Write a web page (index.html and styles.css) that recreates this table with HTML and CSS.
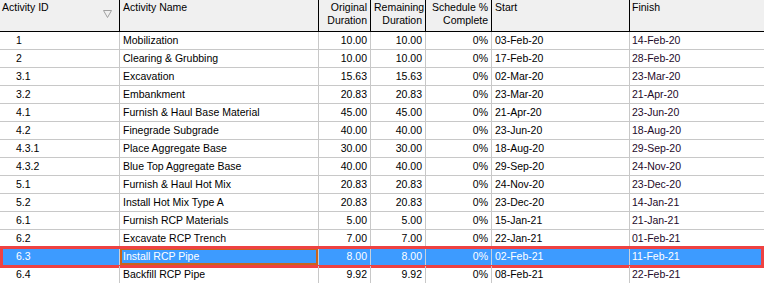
FILE: index.html
```html
<!DOCTYPE html>
<html>
<head>
<meta charset="utf-8">
<link rel="stylesheet" href="styles.css">
</head>
<body>
<div class="grid">
  <div class="row head">
    <div class="c id hd">Activity ID
      <svg class="sort" width="9" height="8" viewBox="0 0 9 8"><path d="M0.5 0.5 H8.5 L4.5 7.5 Z" fill="none" stroke="#a0a0a0" stroke-width="1"/></svg>
    </div>
    <div class="c hd">Activity Name</div>
    <div class="c hd r">Original<br>Duration</div>
    <div class="c hd r">Remaining<br>Duration</div>
    <div class="c hd r">Schedule %<br>Complete</div>
    <div class="c hd">Start</div>
    <div class="c hd last">Finish</div>
  </div>

  <div class="row"><div class="c id">1</div><div class="c">Mobilization</div><div class="c r">10.00</div><div class="c r">10.00</div><div class="c r">0%</div><div class="c">03-Feb-20</div><div class="c fin">14-Feb-20</div></div>
  <div class="row"><div class="c id">2</div><div class="c">Clearing &amp; Grubbing</div><div class="c r">10.00</div><div class="c r">10.00</div><div class="c r">0%</div><div class="c">17-Feb-20</div><div class="c fin">28-Feb-20</div></div>
  <div class="row"><div class="c id">3.1</div><div class="c">Excavation</div><div class="c r">15.63</div><div class="c r">15.63</div><div class="c r">0%</div><div class="c">02-Mar-20</div><div class="c fin">23-Mar-20</div></div>
  <div class="row"><div class="c id">3.2</div><div class="c">Embankment</div><div class="c r">20.83</div><div class="c r">20.83</div><div class="c r">0%</div><div class="c">23-Mar-20</div><div class="c fin">21-Apr-20</div></div>
  <div class="row"><div class="c id">4.1</div><div class="c">Furnish &amp; Haul Base Material</div><div class="c r">45.00</div><div class="c r">45.00</div><div class="c r">0%</div><div class="c">21-Apr-20</div><div class="c fin">23-Jun-20</div></div>
  <div class="row"><div class="c id">4.2</div><div class="c">Finegrade Subgrade</div><div class="c r">40.00</div><div class="c r">40.00</div><div class="c r">0%</div><div class="c">23-Jun-20</div><div class="c fin">18-Aug-20</div></div>
  <div class="row"><div class="c id">4.3.1</div><div class="c">Place Aggregate Base</div><div class="c r">30.00</div><div class="c r">30.00</div><div class="c r">0%</div><div class="c">18-Aug-20</div><div class="c fin">29-Sep-20</div></div>
  <div class="row"><div class="c id">4.3.2</div><div class="c">Blue Top Aggregate Base</div><div class="c r">40.00</div><div class="c r">40.00</div><div class="c r">0%</div><div class="c">29-Sep-20</div><div class="c fin">24-Nov-20</div></div>
  <div class="row"><div class="c id">5.1</div><div class="c">Furnish &amp; Haul Hot Mix</div><div class="c r">20.83</div><div class="c r">20.83</div><div class="c r">0%</div><div class="c">24-Nov-20</div><div class="c fin">23-Dec-20</div></div>
  <div class="row"><div class="c id">5.2</div><div class="c">Install Hot Mix Type A</div><div class="c r">20.83</div><div class="c r">20.83</div><div class="c r">0%</div><div class="c">23-Dec-20</div><div class="c fin">14-Jan-21</div></div>
  <div class="row"><div class="c id">6.1</div><div class="c">Furnish RCP Materials</div><div class="c r">5.00</div><div class="c r">5.00</div><div class="c r">0%</div><div class="c">15-Jan-21</div><div class="c fin">21-Jan-21</div></div>
  <div class="row"><div class="c id">6.2</div><div class="c">Excavate RCP Trench</div><div class="c r">7.00</div><div class="c r">7.00</div><div class="c r">0%</div><div class="c">22-Jan-21</div><div class="c fin">01-Feb-21</div></div>
  <div class="row sel"><div class="c id">6.3</div><div class="c focus">Install RCP Pipe</div><div class="c r">8.00</div><div class="c r">8.00</div><div class="c r">0%</div><div class="c">02-Feb-21</div><div class="c fin">11-Feb-21</div></div>
  <div class="row"><div class="c id">6.4</div><div class="c">Backfill RCP Pipe</div><div class="c r">9.92</div><div class="c r">9.92</div><div class="c r">0%</div><div class="c">08-Feb-21</div><div class="c fin">22-Feb-21</div></div>
</div>
</body>
</html>
```
FILE: styles.css
```css
html, body {
  margin: 0;
  padding: 0;
  background: #ffffff;
}
body {
  font-family: "Liberation Sans", Arial, sans-serif;
  font-size: 10.5px;
  color: #000;
  width: 764px;
  height: 283px;
  overflow: hidden;
}
.grid {
  display: flex;
  flex-direction: column;
}
.row {
  display: grid;
  grid-template-columns: 120px 199px 52px 55px 66px 138px 1fr;
  height: 18px;
  box-sizing: border-box;
  border-bottom: 1px solid #c8c8c8;
  position: relative;
}
.row.head {
  height: 32px;
  background: #f0f0f0;
  border-bottom: 1px solid #000;
}
.c {
  border-right: 1px solid #c8c8c8;
  padding: 0 3px;
  line-height: 17px;
  white-space: nowrap;
  overflow: hidden;
  position: relative;
}
.c.r { text-align: right; }
.c.id { padding-left: 16px; }
.c.fin { border-right: none; padding-left: 2px; color: #1e0a2a; }
.hd {
  border-right: 1px solid #000;
  line-height: 13px;
  padding-top: 1px;
}
.hd.id { padding-left: 2px; }
.hd.last { border-right: none; padding-left: 2px; }
.sort {
  position: absolute;
  left: 103px;
  top: 10px;
}
.sel {
  background: #3d9bff;
}
.sel .c {
  color: #fff;
  border-right-color: #c8d0dc;
}
.sel .c.fin { border-right: none; }
.sel::after {
  content: "";
  position: absolute;
  left: 0;
  right: 0;
  top: -2px;
  bottom: -3px;
  border: 3px solid #ee4242;
  pointer-events: none;
}
.c.focus {
  box-shadow: inset 2px 0 0 #c8641e, inset -2px 0 0 #c8641e, inset 0 -2px 0 #c8641e, inset 0 2px 0 #c8641e;
}
```
